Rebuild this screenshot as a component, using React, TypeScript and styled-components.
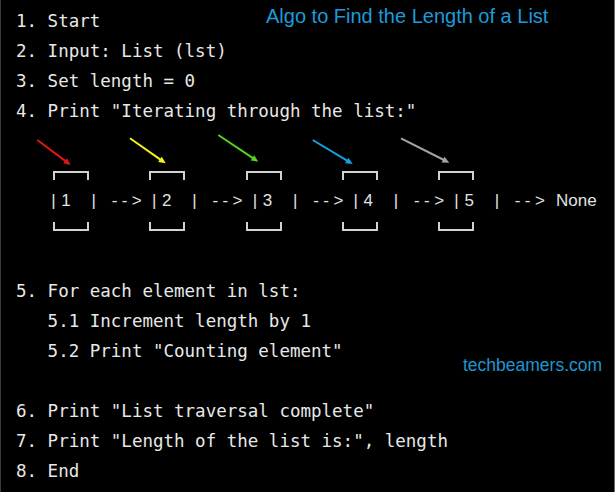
import React from "react";
import styled, { createGlobalStyle } from "styled-components";

const GlobalStyle = createGlobalStyle`
  html, body { margin: 0; padding: 0; background: #000; }
  * { box-sizing: border-box; }
`;

const Frame = styled.div`
  position: relative;
  width: 615px;
  height: 492px;
  overflow: hidden;
  background: #000;
  border-left: 1px solid #3a3a3a;
  border-right: 1px solid #6a6a6a;
  padding: 6px 0 0 15px;
  font-family: "DejaVu Sans Mono", "Liberation Mono", monospace;
  font-size: 17.5px;
  line-height: 30px;
  color: #e8e8e8;
`;

const Line = styled.div<{ $indent?: boolean }>`
  white-space: pre;
  height: 30px;
  padding-left: ${(p) => (p.$indent ? "31.6px" : "0")};
`;

const Blank = styled.div`
  height: 30px;
`;

const Title = styled.div`
  position: absolute;
  top: 5px;
  left: 265px;
  font-family: "Liberation Sans", Arial, sans-serif;
  font-size: 20px;
  line-height: normal;
  color: #1d9bd9;
  white-space: nowrap;
`;

const Site = styled.div`
  position: absolute;
  top: 355px;
  left: 462px;
  font-family: "Liberation Sans", Arial, sans-serif;
  font-size: 17.5px;
  line-height: normal;
  color: #1d97d2;
  white-space: nowrap;
`;

const Diagram = styled.div`
  height: 150px;
  display: flex;
  flex-direction: column;
`;

const ArrowSvg = styled.svg`
  display: block;
  width: 598px;
  height: 45px;
`;

const BracketRow = styled.div`
  display: flex;
  gap: 60.25px;
  margin-left: 37px;
`;

const Bracket = styled.div<{ $bottom?: boolean }>`
  width: 36px;
  height: 9px;
  border: 2px solid #d2d2d2;
  ${(p) => (p.$bottom ? "border-top: none;" : "border-bottom: none;")}
`;

const ListRow = styled.div`
  height: 42px;
  line-height: 42px;
  margin-left: 35.2px;
  font-family: "Liberation Sans", Arial, sans-serif;
  font-size: 17px;
  color: #e2e2e2;
  white-space: nowrap;
`;

const Cell = styled.span`
  display: inline-block;
  width: 10.08px;
  white-space: pre;
`;

const Tail = styled.span`
  display: inline-block;
  margin-left: 1px;
`;

type Arrow = { x1: number; y1: number; x2: number; y2: number; color: string };

const arrows: Arrow[] = [
  { x1: 37.3, y1: 140, x2: 70.7, y2: 165, color: "#e31414" },
  { x1: 130, y1: 138.3, x2: 165.7, y2: 163.3, color: "#f2f21e" },
  { x1: 218.3, y1: 135, x2: 258.3, y2: 161.7, color: "#56d41e" },
  { x1: 312.7, y1: 140, x2: 352.7, y2: 164, color: "#14a2e2" },
  { x1: 401, y1: 138.3, x2: 449.3, y2: 162.7, color: "#a4a4a4" },
];

function ArrowShape({ a }: { a: Arrow }) {
  const dx = a.x2 - a.x1;
  const dy = a.y2 - a.y1;
  const len = Math.hypot(dx, dy);
  const ux = dx / len;
  const uy = dy / len;
  const hl = 7;
  const hw = 3.2;
  const bx = a.x2 - ux * hl;
  const by = a.y2 - uy * hl;
  const pts = [
    [a.x2, a.y2],
    [bx - uy * hw, by + ux * hw],
    [bx + uy * hw, by - ux * hw],
  ]
    .map((p) => p.join(","))
    .join(" ");
  return (
    <g>
      <line x1={a.x1} y1={a.y1} x2={bx + ux} y2={by + uy} stroke={a.color} strokeWidth={2} />
      <polygon points={pts} fill={a.color} />
    </g>
  );
}

const topLines = [
  "1. Start",
  "2. Input: List (lst)",
  "3. Set length = 0",
  '4. Print "Iterating through the list:"',
];

const midLines: { t: string; indent?: boolean }[] = [
  { t: "5. For each element in lst:" },
  { t: "5.1 Increment length by 1", indent: true },
  { t: '5.2 Print "Counting element"', indent: true },
];

const endLines = [
  '6. Print "List traversal complete"',
  '7. Print "Length of the list is:", length',
  "8. End",
];

const listCells = "|1  | --> |2  | --> |3  | --> |4  | --> |5  | --> ";

export default function App() {
  return (
    <>
      <GlobalStyle />
      <Frame>
        <Title>Algo to Find the Length of a List</Title>
        {topLines.map((t) => (
          <Line key={t}>{t}</Line>
        ))}
        <Diagram>
          <ArrowSvg viewBox="16 126 598 45">
            {arrows.map((a, i) => (
              <ArrowShape key={i} a={a} />
            ))}
          </ArrowSvg>
          <BracketRow>
            {[1, 2, 3, 4, 5].map((n) => (
              <Bracket key={n} />
            ))}
          </BracketRow>
          <ListRow>
            {listCells.split("").map((ch, i) => (
              <Cell key={i}>{ch}</Cell>
            ))}
            <Tail>None</Tail>
          </ListRow>
          <BracketRow>
            {[1, 2, 3, 4, 5].map((n) => (
              <Bracket key={n} $bottom />
            ))}
          </BracketRow>
        </Diagram>
        {midLines.map((l) => (
          <Line key={l.t} $indent={l.indent}>
            {l.t}
          </Line>
        ))}
        <Blank />
        {endLines.map((t) => (
          <Line key={t}>{t}</Line>
        ))}
        <Site>techbeamers.com</Site>
      </Frame>
    </>
  );
}
